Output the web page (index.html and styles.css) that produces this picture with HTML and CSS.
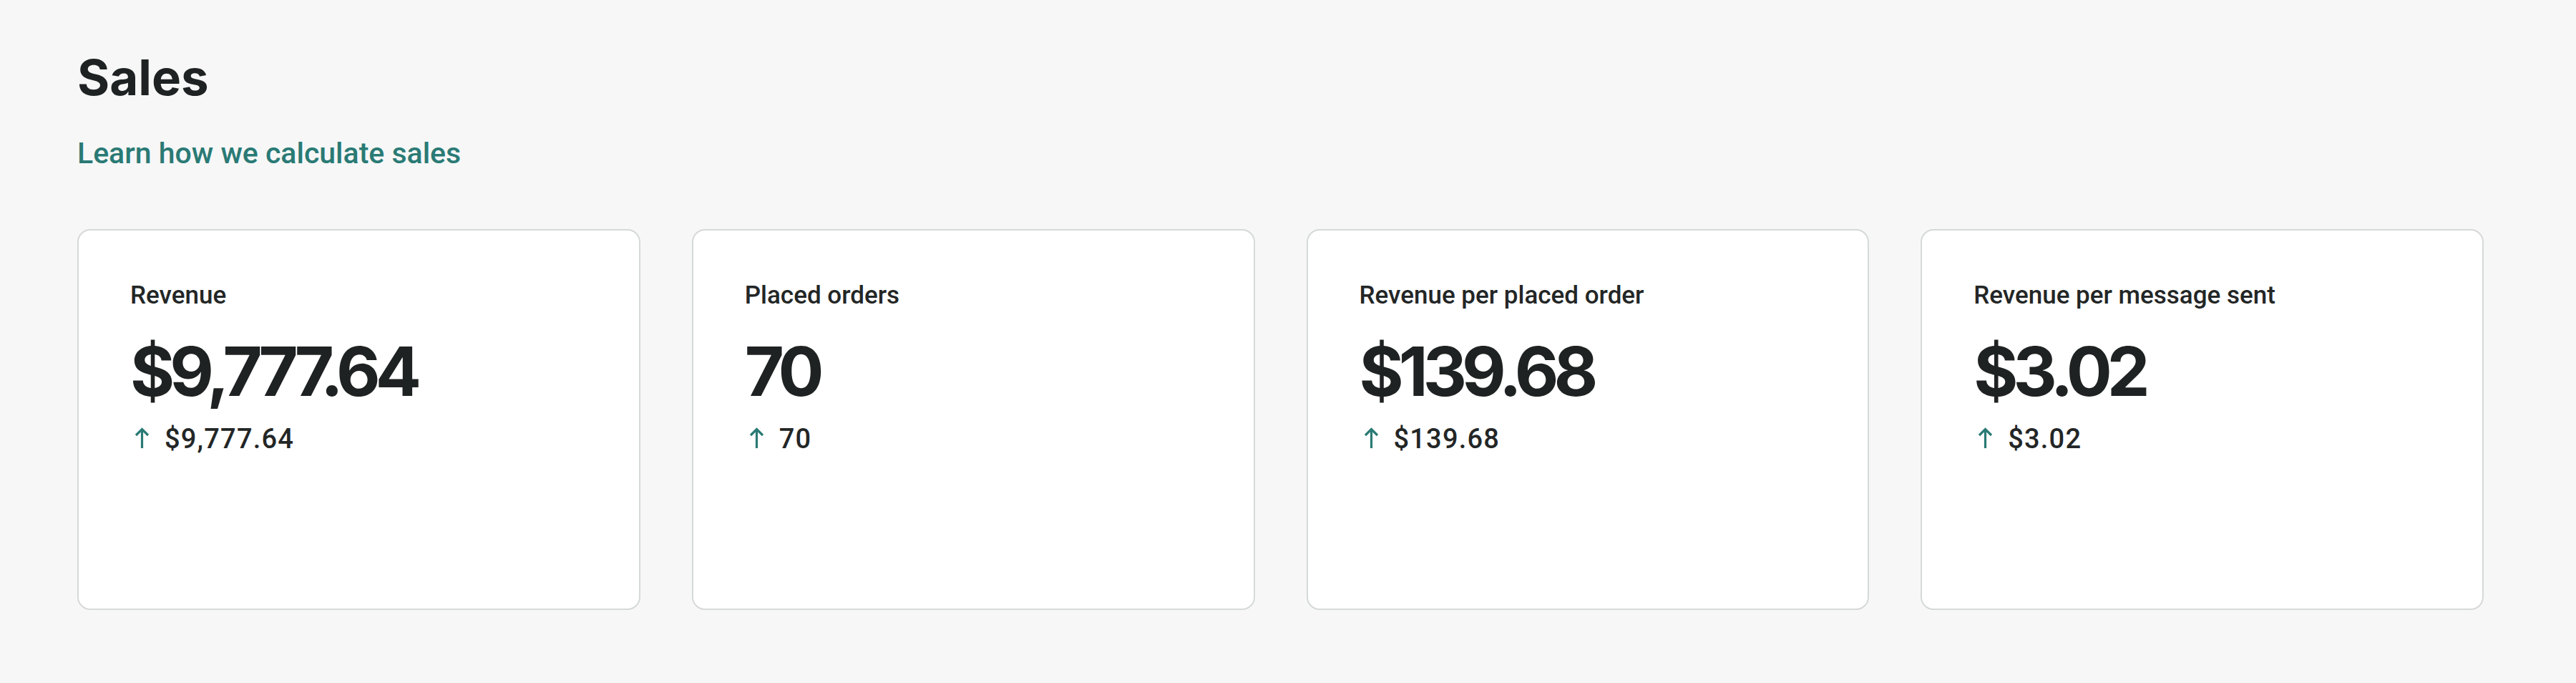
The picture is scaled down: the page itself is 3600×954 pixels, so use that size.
FILE: index.html
```html
<!DOCTYPE html>
<html lang="en">
<head>
<meta charset="utf-8">
<title>Sales</title>
<link rel="stylesheet" href="styles.css">
</head>
<body>
<main class="page">
  <h1 class="title">Sales</h1>
  <a class="learn-link" href="#">Learn how we calculate sales</a>
  <section class="cards">
    <article class="card">
      <div class="card-label">Revenue</div>
      <div class="card-value">$9,777.64</div>
      <div class="card-change">
        <svg class="up-arrow" viewBox="0 0 30 32" aria-hidden="true"><path d="M14.5 29V2.5M6 11L14.5 2.5L23 11"/></svg>
        <span>$9,777.64</span>
      </div>
    </article>
    <article class="card">
      <div class="card-label">Placed orders</div>
      <div class="card-value">70</div>
      <div class="card-change">
        <svg class="up-arrow" viewBox="0 0 30 32" aria-hidden="true"><path d="M14.5 29V2.5M6 11L14.5 2.5L23 11"/></svg>
        <span>70</span>
      </div>
    </article>
    <article class="card">
      <div class="card-label">Revenue per placed order</div>
      <div class="card-value">$139.68</div>
      <div class="card-change">
        <svg class="up-arrow" viewBox="0 0 30 32" aria-hidden="true"><path d="M14.5 29V2.5M6 11L14.5 2.5L23 11"/></svg>
        <span>$139.68</span>
      </div>
    </article>
    <article class="card">
      <div class="card-label">Revenue per message sent</div>
      <div class="card-value">$3.02</div>
      <div class="card-change">
        <svg class="up-arrow" viewBox="0 0 30 32" aria-hidden="true"><path d="M14.5 29V2.5M6 11L14.5 2.5L23 11"/></svg>
        <span>$3.02</span>
      </div>
    </article>
  </section>
</main>
</body>
</html>
```
FILE: styles.css
```css
html, body {
  margin: 0;
  padding: 0;
  background: #f7f7f7;
}

body {
  font-family: Roboto, "Liberation Sans", sans-serif;
  color: #1f2222;
}

.page {
  display: flex;
  flex-direction: column;
  align-items: flex-start;
  padding: 73px 129px 0 108px;
}

.title {
  margin: 0;
  font-family: Inter, "Liberation Sans", sans-serif;
  font-weight: 700;
  font-size: 69px;
  line-height: 70px;
  letter-spacing: 0;
  color: #1f2222;
}

.learn-link {
  margin-top: 48px;
  font-family: Roboto, "Liberation Sans", sans-serif;
  font-weight: 500;
  font-size: 41px;
  line-height: 46px;
  color: #2a7a75;
  text-decoration: none;
}

.cards {
  align-self: stretch;
  margin-top: 83px;
  display: grid;
  grid-template-columns: repeat(4, 1fr);
  gap: 72px;
}

.card {
  box-sizing: border-box;
  min-height: 532px;
  padding: 71px 72px;
  background: #ffffff;
  border: 2px solid #d6d9d9;
  border-radius: 18px;
  display: flex;
  flex-direction: column;
  align-items: flex-start;
}

.card-label {
  font-weight: 500;
  font-size: 35px;
  line-height: 40px;
  color: #232626;
}

.card-value {
  margin-top: 36px;
  font-family: Inter, "Liberation Sans", sans-serif;
  font-weight: 700;
  font-size: 95px;
  line-height: 100px;
  letter-spacing: -7px;
  color: #1f2222;
}

.card-change {
  margin-top: 24px;
  display: flex;
  align-items: center;
  gap: 16px;
  font-weight: 500;
  font-size: 38px;
  line-height: 40px;
  letter-spacing: 1.2px;
  color: #232626;
}

.up-arrow {
  margin-left: 2px;
  width: 30px;
  height: 32px;
  fill: none;
  stroke: #2a7a75;
  stroke-width: 3.2;
  stroke-linecap: butt;
  stroke-linejoin: miter;
}
```
